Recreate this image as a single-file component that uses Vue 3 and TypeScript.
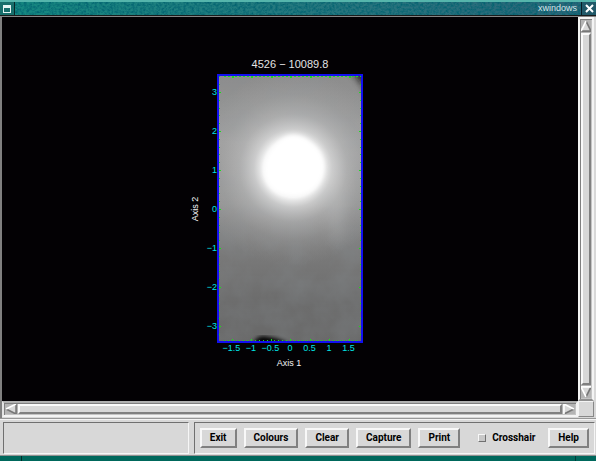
<script setup lang="ts">
import { ref } from 'vue'

const crosshair = ref(false)
const actions: string[] = ['Exit', 'Colours', 'Clear', 'Capture', 'Print']

// Plot geometry: 39 units of drawing space per axis unit, origin at (100, 161)
const unit = 39
const ox = 100
const oy = 161
const fmt = (v: number): string => String(v).replace('-', '−')

const yLabels = [3, 2, 1, 0, -1, -2, -3].map((v) => ({ text: fmt(v), y: oy - v * unit }))
const xLabels = [-1.5, -1, -0.5, 0, 0.5, 1, 1.5].map((v) => ({ text: fmt(v), x: ox + v * unit }))

const xTicks = Array.from({ length: 35 }, (_, i) => i - 17).map((n) => ({
  x: Math.round(ox + (n * unit) / 10),
  len: n % 5 === 0 ? 2 : 1,
}))
const yTicks = Array.from({ length: 35 }, (_, i) => i - 17).map((n) => ({
  y: Math.round(oy + (n * unit) / 5),
  len: n % 5 === 0 ? 2 : 1,
}))
</script>

<template>
  <div class="window">
    <header class="titlebar">
      <svg class="grain" aria-hidden="true">
        <filter id="marble" x="0" y="0" width="100%" height="100%">
          <feTurbulence type="fractalNoise" baseFrequency="0.37 0.43" numOctaves="3" seed="4" />
          <feColorMatrix values="0 0 0 0 0  0 0 0 0 0.12  0 0 0 0 0.16  2 0 0 0 -0.7" />
        </filter>
        <rect width="100%" height="100%" filter="url(#marble)" />
      </svg>
      <button class="tb-btn menu" type="button" aria-label="Window menu">
        <svg width="8" height="8" viewBox="0 0 8 8"><path d="M0 0h8v8H0z M1 3v4h6V3z" fill="#e4f4f2" fill-rule="evenodd" /></svg>
      </button>
      <h1 class="title">xwindows</h1>
      <button class="tb-btn close" type="button" aria-label="Close">
        <svg width="9" height="9" viewBox="0 0 9 9"><path d="M1 1l7 7M8 1l-7 7" stroke="#fff" stroke-width="2" /></svg>
      </button>
    </header>

    <main class="view">
      <div class="canvas">
        <svg class="plot" width="200" height="322" viewBox="0 0 200 322" role="img" aria-label="Image plot">
          <defs>
            <linearGradient id="base" x1="0" y1="0" x2="0" y2="1">
              <stop offset="0" stop-color="#8c8c8c" />
              <stop offset="0.25" stop-color="#9c9c9c" />
              <stop offset="0.48" stop-color="#939393" />
              <stop offset="0.65" stop-color="#7b7b7b" />
              <stop offset="0.85" stop-color="#6c6c6c" />
              <stop offset="1" stop-color="#696969" />
            </linearGradient>
            <radialGradient id="glow">
              <stop offset="0" stop-color="#fff" />
              <stop offset="0.3" stop-color="#fff" stop-opacity="0.9" />
              <stop offset="0.4" stop-color="#f4f4f4" stop-opacity="0.55" />
              <stop offset="0.55" stop-color="#e0e0e0" stop-opacity="0.3" />
              <stop offset="0.75" stop-color="#d0d0d0" stop-opacity="0.12" />
              <stop offset="1" stop-color="#ccc" stop-opacity="0" />
            </radialGradient>
            <filter id="soft1"><feGaussianBlur stdDeviation="2" /></filter>
            <filter id="soft2" x="-100%" y="-50%" width="300%" height="200%"><feGaussianBlur stdDeviation="7" /></filter>
            <filter id="mottle" x="0" y="0" width="100%" height="100%">
              <feTurbulence type="fractalNoise" baseFrequency="0.035" numOctaves="4" seed="8" />
              <feColorMatrix values="0 0 0 0 0.25  0 0 0 0 0.28  0 0 0 0 0.3  0.5 0 0 0 -0.16" />
            </filter>
            <clipPath id="frame"><rect x="28" y="27" width="144" height="267" /></clipPath>
          </defs>

          <g clip-path="url(#frame)">
            <rect x="28" y="27" width="144" height="267" fill="url(#base)" />
            <rect x="28" y="27" width="144" height="267" filter="url(#mottle)" />
            <ellipse cx="147" cy="150" rx="7" ry="45" fill="#c0c0c0" opacity="0.3" filter="url(#soft2)" />
            <circle cx="103" cy="120" r="98" fill="url(#glow)" />
            <path d="M103 87c10 0 15 5 22 11 6 6 9 12 9 21 0 11-5 18-11 23-6 4-12 6-19 6-8 0-16-2-22-7-5-5-8-12-8-19 0-10 4-17 10-24 6-6 11-11 19-11z" fill="#fff" filter="url(#soft1)" />
            <path d="M157 24h20v30c-4-12-11-20-20-30z" fill="#484848" opacity="0.5" filter="url(#soft1)" />
            <path d="M166 26h7v10z" fill="#222" filter="url(#soft1)" />
            <path d="M63 296c3-7 9-9 15-7 7 1 15 3 20 7z" fill="#050505" filter="url(#soft1)" />
          </g>

          <g fill="#18e018" shape-rendering="crispEdges">
            <template v-for="t in xTicks" :key="t.x">
              <rect :x="t.x" y="28" width="2" :height="t.len" />
              <rect :x="t.x" :y="293 - t.len" width="1" :height="t.len" />
            </template>
            <template v-for="t in yTicks" :key="t.y">
              <rect x="29" :y="t.y" :width="t.len" height="1" />
              <rect :x="171 - t.len" :y="t.y" :width="t.len" height="1" />
            </template>
          </g>
          <rect x="28" y="27" width="144" height="267" fill="none" stroke="#1010f0" stroke-width="2" />

          <g class="ticks">
            <text v-for="l in yLabels" :key="l.text" x="27" :y="l.y + 3" text-anchor="end">{{ l.text }}</text>
            <text v-for="l in xLabels" :key="l.text" :x="l.x" y="303" text-anchor="middle">{{ l.text }}</text>
          </g>
          <text class="heading" x="100" y="20" text-anchor="middle">4526 − 10089.8</text>
          <text class="axis" x="99" y="318" text-anchor="middle">Axis 1</text>
          <text class="axis" transform="translate(8 161) rotate(-90)" text-anchor="middle">Axis 2</text>
        </svg>
      </div>

      <div class="scroll vertical">
        <button class="arrow" type="button" aria-label="Scroll up">
          <svg width="12" height="13" viewBox="0 0 12 13"><path d="M6 0l6 12H0z" fill="#d8d8d8" /><path d="M6 0l6 12H0" fill="none" stroke="#777" stroke-width="2" /><path d="M6 0L0 12" stroke="#fff" stroke-width="2" /></svg>
        </button>
        <div class="thumb"></div>
        <button class="arrow" type="button" aria-label="Scroll down">
          <svg width="12" height="13" viewBox="0 0 12 13"><path d="M0 1h12L6 13z" fill="#d8d8d8" /><path d="M12 1L6 13" stroke="#777" stroke-width="2" /><path d="M12 1H0l6 12" fill="none" stroke="#fff" stroke-width="2" /></svg>
        </button>
      </div>

      <div class="scroll horizontal">
        <button class="arrow" type="button" aria-label="Scroll left">
          <svg width="13" height="12" viewBox="0 0 13 12"><path d="M0 6l12-6v12z" fill="#d8d8d8" /><path d="M12 0v12L0 6" fill="none" stroke="#777" stroke-width="2" /><path d="M0 6l12-6" stroke="#fff" stroke-width="2" /></svg>
        </button>
        <div class="thumb"></div>
        <button class="arrow" type="button" aria-label="Scroll right">
          <svg width="13" height="12" viewBox="0 0 13 12"><path d="M1 0l12 6-12 6z" fill="#d8d8d8" /><path d="M1 12l12-6" stroke="#777" stroke-width="2" /><path d="M1 12V0l12 6" fill="none" stroke="#fff" stroke-width="2" /></svg>
        </button>
      </div>
      <div class="corner"></div>
    </main>

    <footer class="bar">
      <div class="status"></div>
      <div class="controls">
        <button v-for="a in actions" :key="a" class="push" type="button">{{ a }}</button>
        <label class="toggle"><input v-model="crosshair" type="checkbox" />Crosshair</label>
        <button class="push help" type="button">Help</button>
      </div>
    </footer>
    <div class="edge"></div>
  </div>
</template>

<style>
body {
  margin: 0;
  background: #000;
}
</style>

<style scoped>
* {
  box-sizing: border-box;
}
.window {
  display: flex;
  flex-direction: column;
  min-height: 100vh;
  background: #d8d8d8;
  font-family: "Liberation Sans", sans-serif;
}
button {
  margin: 0;
  padding: 0;
  font: inherit;
}
.titlebar {
  position: relative;
  display: flex;
  align-items: stretch;
  height: 16px;
  border-top: 2px solid #55b5ac;
  border-bottom: 1px solid #181c1c;
  background: linear-gradient(90deg, #148880, #28757e 60%, #2c6478);
}
.grain {
  position: absolute;
  inset: 0;
  width: 100%;
  height: 100%;
}
.tb-btn {
  position: relative;
  display: flex;
  align-items: center;
  justify-content: center;
  width: 15px;
  border: 0;
  background: #176e6b;
}
.menu {
  border-right: 1px solid #082828;
}
.close {
  border-left: 1px solid #081c24;
  background: #205868;
}
.title {
  position: relative;
  flex: 1;
  margin: 0;
  padding-right: 4px;
  color: #d5e4e8;
  font: 9px/13px "Liberation Sans", sans-serif;
  text-align: right;
}
.view {
  flex: 1;
  display: grid;
  grid-template-columns: minmax(0, 1fr) 16px;
  grid-template-rows: minmax(0, 1fr) 16px;
  padding: 0 2px 1px;
  border-top: 1px solid #858585;
  box-shadow: inset 2px 0 #808080;
}
.canvas {
  display: flex;
  align-items: center;
  justify-content: center;
  background: #030104;
}
.plot {
  display: block;
}
.plot text {
  font-size: 9px;
}
.plot .heading {
  fill: #e4e4e4;
  font-size: 11px;
}
.plot .axis {
  fill: #f4f4f4;
}
.ticks {
  fill: #00e4e4;
}
.scroll {
  display: flex;
  padding: 1px;
  border: 2px solid;
  border-color: #f4f4f4 #f4f4f4 #909090 #f4f4f4;
  background: #c4c4c4;
  box-shadow: inset 1px 1px #808080;
}
.vertical {
  flex-direction: column;
}
.horizontal {
  border-color: #b0b0b0 #f4f4f4 #f4f4f4 #e4e4e4;
}
.thumb {
  flex: 1;
  border: 2px solid;
  border-color: #fafafa #808080 #808080 #fafafa;
  background: #d8d8d8;
}
.arrow {
  display: flex;
  align-items: center;
  justify-content: center;
  border: 0;
  background: #b4b4b4;
}
.vertical .arrow {
  height: 13px;
}
.horizontal .arrow {
  width: 13px;
}
.arrow svg {
  flex: none;
  max-width: 100%;
  max-height: 100%;
}
.corner {
  border: 1px solid;
  border-color: #f4f4f4 #888 #888 #f4f4f4;
}
.bar {
  display: flex;
  gap: 5px;
  padding: 3px 1px 1px 3px;
  border-top: 1px solid #989898;
  border-bottom: 1px solid #909090;
  box-shadow: inset 0 1px #f4f4f4;
}
.status,
.controls {
  height: 32px;
  border: 1px solid;
  border-color: #707070 #f6f6f6 #f6f6f6 #707070;
}
.status {
  flex: 186 1 0;
}
.controls {
  flex: 394 1 0;
  display: flex;
  align-items: center;
  gap: 7px;
  padding: 0 5px;
}
.push,
.toggle {
  color: #000;
  font-family: Roboto, sans-serif;
  font-size: 10px;
  font-weight: 700;
  line-height: 16px;
  white-space: nowrap;
}
.push {
  height: 20px;
  padding: 0 8px;
  border: 2px solid;
  border-color: #f8f8f8 #808080 #808080 #f8f8f8;
  background: #d8d8d8;
}
.toggle {
  display: flex;
  align-items: center;
  gap: 6px;
  margin-left: 11px;
}
.toggle input {
  appearance: none;
  width: 8px;
  height: 8px;
  margin: 0;
  border: 1px solid;
  border-color: #f8f8f8 #707070 #707070 #f8f8f8;
  background: #c8c8c8;
}
.toggle input:checked {
  border-color: #707070 #f8f8f8 #f8f8f8 #707070;
}
.help {
  margin-left: auto;
}
.edge {
  height: 5px;
  background: linear-gradient(90deg, transparent 21px, #002c2a 21px 22px, transparent 22px calc(100% - 21px), #003c38 calc(100% - 21px) calc(100% - 20px), transparent 0), #00685c;
}
</style>
